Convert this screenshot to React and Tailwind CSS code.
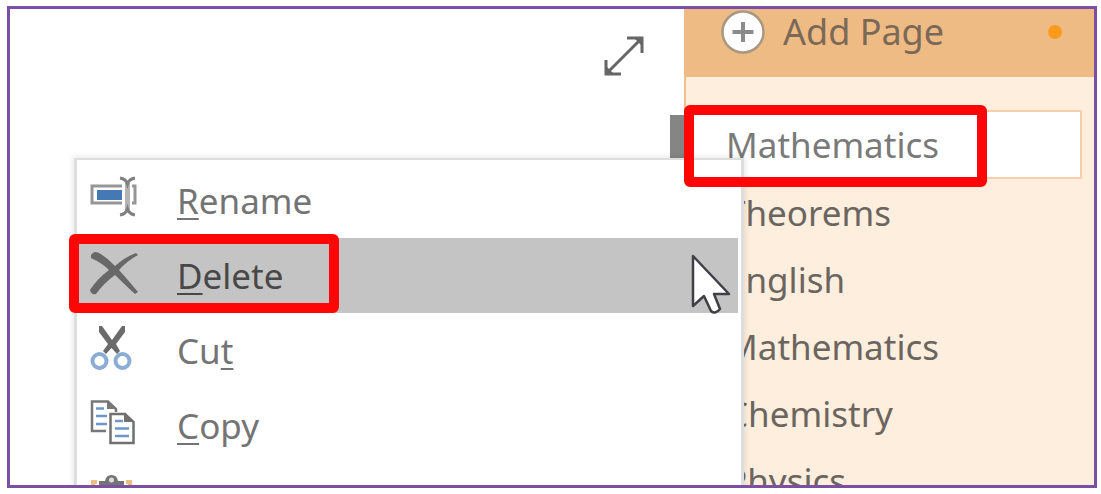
const pages = ["Theorems", "English", "Mathematics", "Chemistry", "Physics"];

function RenameIcon() {
  return (
    <svg viewBox="0 0 50 50" className="size-[50px]" fill="none" aria-hidden="true">
      <rect x="3" y="12" width="43" height="17" stroke="#969696" strokeWidth="3" />
      <rect x="8" y="16" width="25" height="10" fill="#4479b3" />
      <rect x="33" y="9" width="10" height="23" fill="#fff" />
      <path d="M38.500 9V37" stroke="#b4b4b4" strokeWidth="5" />
      <path d="M31 4Q37 5 38.500 10Q40 5 46 4M31 41Q37 40 38.500 35Q40 40 46 41" stroke="#808080" strokeWidth="3" />
    </svg>
  );
}

function DeleteIcon() {
  return (
    <svg viewBox="0 0 50 50" className="size-[50px]" fill="#686868" aria-hidden="true">
      <path d="M2 6Q5 1 10 4Q19 9 26 17Q36 8 47 4L49 6Q38 12 30 21Q39 31 49 43L46 45Q36 36 26 26Q15 34 7 45Q2 46 1 41Q8 30 20 21Q13 14 2 9Z" />
    </svg>
  );
}

function CutIcon() {
  return (
    <svg viewBox="0 0 50 50" className="size-[50px]" fill="none" aria-hidden="true">
      <path d="M10 2L13 2L23 16L33 2L36 2L36 8L27 20L31 27L28 30L22.500 24L17 30L14 27L19 20L10 8Z" fill="#6b6b6b" />
      <circle cx="10.500" cy="37" r="7" stroke="#8badd3" strokeWidth="4" />
      <circle cx="33.500" cy="37" r="7" stroke="#8badd3" strokeWidth="4" />
    </svg>
  );
}

function CopyIcon() {
  return (
    <svg viewBox="0 0 50 50" className="size-[50px]" fill="none" aria-hidden="true">
      <path d="M3 2.500H19L27 10V32H3Z" fill="#fff" />
      <path d="M17 32H3V2.500H19L27 10V13" stroke="#777" strokeWidth="2.500" />
      <path d="M18 2V10H27Z" fill="#777" />
      <path d="M7 9.500H15M7 17H18M7 25H18" stroke="#6c97c7" strokeWidth="2.500" />
      <path d="M21.500 15H36L44.500 23V44H21.500Z" fill="#fff" stroke="#707070" strokeWidth="2.500" />
      <path d="M35 14V23H45Z" fill="#707070" />
      <path d="M26 22H34M26 29.500H40M26 37H40" stroke="#6c97c7" strokeWidth="2.500" />
    </svg>
  );
}

function PasteIcon() {
  return (
    <svg viewBox="0 0 50 50" className="size-[50px]" fill="none" aria-hidden="true">
      <path d="M8 8H4V46H41V8H37" stroke="#efbd82" strokeWidth="4" />
      <path d="M10 13V7H16Q17 1 22.500 1Q28 1 29 7H35V13Z" fill="#747474" />
      <circle cx="22.500" cy="6" r="2.500" fill="#ddd" />
    </svg>
  );
}

function Key({ children }) {
  return (
    <span className="underline decoration-2 underline-offset-4 [text-decoration-skip-ink:none]">{children}</span>
  );
}

function MenuItem({ icon, active, label, children }) {
  return (
    <li className="relative" role="none">
      <button
        type="button"
        role="menuitem"
        aria-label={label}
        className={
          active
            ? "flex h-[75px] w-full items-center gap-[38px] bg-[#c4c4c4] pl-3 text-left text-[#484848]"
            : "flex h-[75px] w-full items-center gap-[38px] pl-3 text-left text-[#747474]"
        }
      >
        <span className="flex pb-1">{icon}</span>
        <span>{children}</span>
      </button>
      {active && (
        <div className="pointer-events-none absolute -top-1 -left-2 z-20 h-[79px] w-[270px] rounded-md border-[10px] border-[#ff0606]" />
      )}
    </li>
  );
}

function ContextMenu() {
  return (
    <ul
      role="menu"
      className="absolute top-[149px] left-16 z-10 w-[670px] border-t-2 border-r-3 border-l-3 border-[#dedede] bg-white pt-[3px] pr-[3px] shadow-[0_0_5px_2px_rgba(0,0,0,0.08)]"
    >
      <MenuItem icon={<RenameIcon />} label="Rename"><Key>R</Key>ename</MenuItem>
      <MenuItem icon={<DeleteIcon />} label="Delete" active><Key>D</Key>elete</MenuItem>
      <MenuItem icon={<CutIcon />} label="Cut">Cu<Key>t</Key></MenuItem>
      <MenuItem icon={<CopyIcon />} label="Copy"><Key>C</Key>opy</MenuItem>
      <MenuItem icon={<PasteIcon />} label="Paste" />
    </ul>
  );
}

export default function App() {
  return (
    <div className="flex h-screen bg-white py-1.5 pr-1 pl-[7px] font-['Noto_Sans',sans-serif] text-[35px] leading-[48px]">
      <div className="relative flex min-w-0 flex-1 overflow-hidden border-3 border-[#7d4fa3]">
        <main className="flex min-w-0 flex-1 items-start justify-end">
          <button type="button" aria-label="Expand" className="mt-[27px]">
            <svg viewBox="0 0 40 40" className="size-10" fill="none" stroke="#666" strokeWidth="3" aria-hidden="true">
              <path d="M2 38L38 2M23 2H38V17M2 24V38H17" />
              <path d="M30 2H38V10ZM2 30V38H10Z" fill="#666" stroke="none" />
            </svg>
          </button>
          <div className="mt-[106px] ml-[26px] h-16 w-3.5 bg-[#858585]" />
        </main>

        <aside className="w-[410px] shrink-0 border-l-2 border-[#f0c08a] bg-[#fdeedd]">
          <header className="-ml-0.5 flex h-[68px] items-center justify-between bg-[#efbb84] pr-8 pb-[22px] pl-[37px]">
            <button type="button" className="flex items-center gap-[18px] text-[36px] text-[#7b6957]">
              <svg viewBox="0 0 44 44" className="size-11" fill="none" aria-hidden="true">
                <circle cx="22" cy="22" r="20.500" fill="#fff" stroke="#a89880" strokeWidth="2.500" />
                <path d="M11.500 22H32.500M22 12V32" stroke="#8b8b8b" strokeWidth="4" />
              </svg>
              Add Page
            </button>
            <span className="size-3.5 rounded-full bg-[#fd9a1c]" />
          </header>

          <ul className="pt-[33px] pr-3 text-[#6b6560]">
            <li className="relative">
              <button
                type="button"
                aria-current="page"
                className="flex h-[69px] w-full items-center border-2 border-[#f5d0a8] bg-white pl-[38px] text-[#7a7a7a]"
              >
                Mathematics
              </button>
              <div className="pointer-events-none absolute -top-[5px] -left-0.5 z-20 h-[82px] w-[303px] rounded-md border-[10px] border-[#ff0606]" />
            </li>
            {pages.map((name) => (
              <li key={name}>
                <button type="button" className="flex h-[67px] w-full items-center pl-10 text-left">
                  {name}
                </button>
              </li>
            ))}
          </ul>
        </aside>

        <ContextMenu />

        <svg
          viewBox="0 0 44 64"
          className="pointer-events-none absolute top-[244px] left-[680px] z-30 h-16 w-11"
          fill="#fff"
          stroke="#3f3f46"
          strokeWidth="2.500"
          strokeLinejoin="round"
          aria-hidden="true"
        >
          <path d="M3 3V53L14 43L21 58Q25 62 30 56L24 41H39Z" />
        </svg>
      </div>
    </div>
  );
}
